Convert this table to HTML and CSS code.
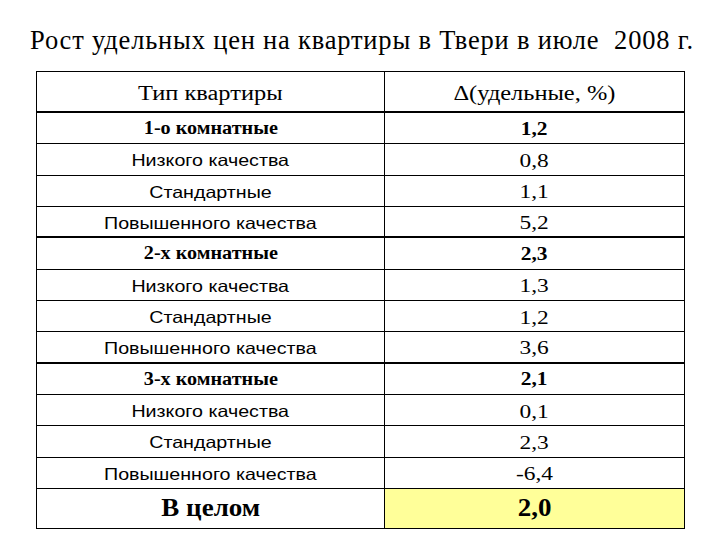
FILE: index.html
```html
<!DOCTYPE html>
<html lang="ru">
<head>
<meta charset="utf-8">
<title>Рост удельных цен</title>
<link rel="stylesheet" href="styles.css">
</head>
<body>
<div class="slide">
  <h1 class="title">Рост удельных цен на квартиры в Твери в июле&nbsp; 2008 г.</h1>
  <table class="grid">
    <tr class="head"><th class="c1"><span class="t">Тип квартиры</span></th><th class="c2"><span class="t">Δ(удельные, %)</span></th></tr>
    <tr class="group"><td class="c1"><span class="t">1-о комнатные</span></td><td class="c2"><span class="t">1,2</span></td></tr>
    <tr class="item"><td class="c1"><span class="t">Низкого качества</span></td><td class="c2"><span class="t">0,8</span></td></tr>
    <tr class="item"><td class="c1"><span class="t">Стандартные</span></td><td class="c2"><span class="t">1,1</span></td></tr>
    <tr class="item last"><td class="c1"><span class="t">Повышенного качества</span></td><td class="c2"><span class="t">5,2</span></td></tr>
    <tr class="group"><td class="c1"><span class="t">2-х комнатные</span></td><td class="c2"><span class="t">2,3</span></td></tr>
    <tr class="item"><td class="c1"><span class="t">Низкого качества</span></td><td class="c2"><span class="t">1,3</span></td></tr>
    <tr class="item"><td class="c1"><span class="t">Стандартные</span></td><td class="c2"><span class="t">1,2</span></td></tr>
    <tr class="item last"><td class="c1"><span class="t">Повышенного качества</span></td><td class="c2"><span class="t">3,6</span></td></tr>
    <tr class="group"><td class="c1"><span class="t">3-х комнатные</span></td><td class="c2"><span class="t">2,1</span></td></tr>
    <tr class="item"><td class="c1"><span class="t">Низкого качества</span></td><td class="c2"><span class="t">0,1</span></td></tr>
    <tr class="item"><td class="c1"><span class="t">Стандартные</span></td><td class="c2"><span class="t">2,3</span></td></tr>
    <tr class="item"><td class="c1"><span class="t">Повышенного качества</span></td><td class="c2"><span class="t">-6,4</span></td></tr>
    <tr class="total"><td class="c1"><span class="t">В целом</span></td><td class="c2 hl"><span class="t">2,0</span></td></tr>
  </table>
</div>
</body>
</html>
```

FILE: styles.css
```css
html, body {
  margin: 0;
  padding: 0;
  background: #ffffff;
}

.slide {
  width: 720px;
  height: 540px;
  padding-top: 25px;
  box-sizing: border-box;
  font-family: "Liberation Serif", "Times New Roman", serif;
  color: #000;
}

.title {
  margin: 0 0 16px 30px;
  font-weight: normal;
  font-size: 26.5px;
  line-height: 30px;
  letter-spacing: 0.8px;
  white-space: nowrap;
}

.grid {
  margin-left: 36px;
  border-collapse: separate;
  border-spacing: 0;
  border-top: 1px solid #000;
  border-left: 1px solid #000;
  table-layout: fixed;
}

.grid th,
.grid td {
  box-sizing: border-box;
  padding: 0;
  text-align: center;
  vertical-align: middle;
  border-right: 1px solid #000;
  border-bottom: 1px solid #000;
  white-space: nowrap;
}

.grid .c1 { width: 348px; }
.grid .c2 { width: 300px; }

.t {
  display: inline-block;
  transform-origin: center center;
}

.head th {
  height: 41px;
  padding-top: 4px;
  font-weight: normal;
  font-size: 20px;
  border-bottom-width: 2px;
}

.head .t {
  transform: scaleX(1.22);
}

.group td {
  height: 31.33px;
  padding-top: 1px;
  font-weight: bold;
  font-size: 18px;
}

.group .t {
  transform: scaleX(1.12);
}

.group td.c2 {
  font-size: 19.5px;
}

.group td.c2 .t {
  transform: scaleX(1.1);
}

.item td {
  height: 31.33px;
  padding-top: 3px;
  font-size: 19.5px;
}

.item .t {
  transform: scaleX(1.2);
}

.item td.c1 {
  font-family: "Liberation Sans", Arial, sans-serif;
  font-size: 16.5px;
}

.item td.c1 .t {
  transform: scaleX(1.19);
}

.item.last td {
  border-bottom-width: 2px;
}

.total td {
  height: 40px;
  font-weight: bold;
  font-size: 25px;
}

.total .t {
  transform: scaleX(1.08);
}

.total .hl {
  background: #ffff99;
}
```
